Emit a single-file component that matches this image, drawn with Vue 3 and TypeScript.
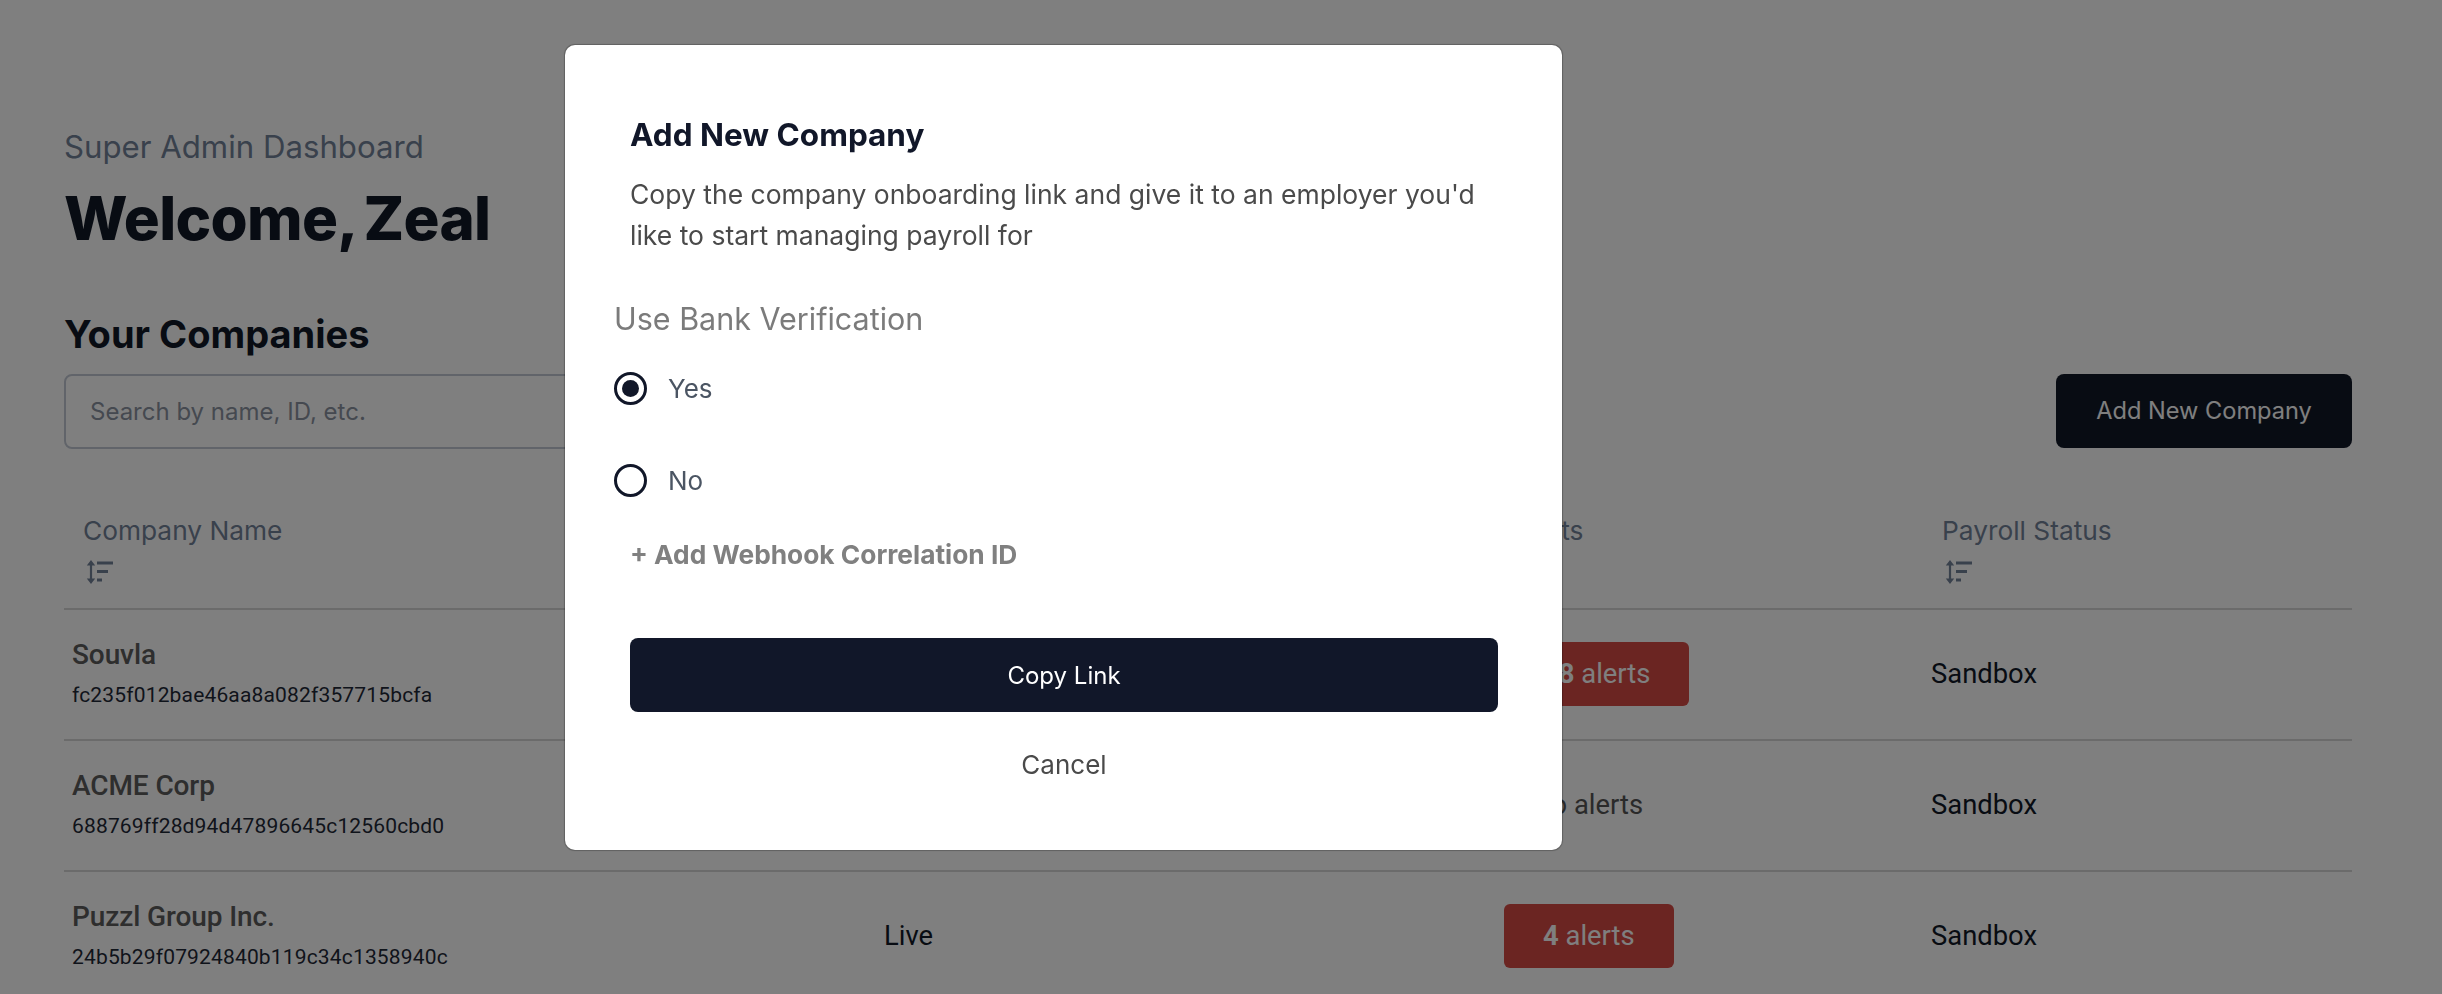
<script setup lang="ts">
interface Company {
  name: string
  id: string
  status: string
  count: string
  label: string
  danger: boolean
  payroll: string
}

const headers: string[] = ['Company Name', 'Status', 'Alerts', 'Payroll Status']

const companies: Company[] = [
  { name: 'Souvla', id: 'fc235f012bae46aa8a082f357715bcfa', status: 'Live', count: '18', label: 'alerts', danger: true, payroll: 'Sandbox' },
  { name: 'ACME Corp', id: '688769ff28d94d47896645c12560cbd0', status: 'Live', count: 'No', label: 'alerts', danger: false, payroll: 'Sandbox' },
  { name: 'Puzzl Group Inc.', id: '24b5b29f07924840b119c34c1358940c', status: 'Live', count: '4', label: 'alerts', danger: true, payroll: 'Sandbox' },
]
</script>

<template>
  <div class="page">
    <p class="eyebrow">Super Admin Dashboard</p>
    <h1 class="welcome">Welcome, Zeal</h1>
    <h2 class="section">Your Companies</h2>
    <div class="toolbar">
      <input class="search" type="text" placeholder="Search by name, ID, etc." />
      <button class="add" type="button">Add New Company</button>
    </div>
    <div class="table">
      <div class="row head">
        <div v-for="h in headers" :key="h" class="hcell">
          <span>{{ h }}</span>
          <svg class="sort" viewBox="0 0 28 24" width="28" height="24" fill="none" aria-hidden="true">
            <path d="M5 3v18" stroke="#738299" stroke-width="2.2" />
            <path d="M5 0 9.2 5.5H0.8ZM5 24 0.8 18.5H9.2Z" fill="#738299" />
            <path d="M11 3h16M11 11.5h11M11 20h5" stroke="#738299" stroke-width="3" />
          </svg>
        </div>
      </div>
      <div v-for="c in companies" :key="c.id" class="row body">
        <div class="cell first">
          <div class="name">{{ c.name }}</div>
          <div class="cid">{{ c.id }}</div>
        </div>
        <div class="cell">{{ c.status }}</div>
        <div class="cell">
          <span :class="c.danger ? 'badge' : 'plain'"><b v-if="c.danger">{{ c.count }}</b><template v-else>{{ c.count }}</template> {{ c.label }}</span>
        </div>
        <div class="cell">{{ c.payroll }}</div>
      </div>
    </div>
  </div>

  <div class="overlay">
    <div class="modal">
      <h3 class="m-title">Add New Company</h3>
      <p class="m-text">Copy the company onboarding link and give it to an employer you'd like to start managing payroll for</p>
      <div class="m-label">Use Bank Verification</div>
      <label class="radio yes">
        <span class="circle on"></span>
        <span>Yes</span>
      </label>
      <label class="radio no">
        <span class="circle"></span>
        <span>No</span>
      </label>
      <div class="webhook">+ Add Webhook Correlation ID</div>
      <button class="copy" type="button">Copy Link</button>
      <button class="cancel" type="button">Cancel</button>
    </div>
  </div>
</template>

<style>
html, body { margin: 0; height: 100%; overflow: hidden; background: #fff; }
</style>

<style scoped>
.page {
  box-sizing: border-box;
  height: 994px;
  overflow: hidden;
  padding: 127px 90px 0 64px;
  font-family: Inter, "Noto Sans", sans-serif;
  color: #111827;
  background: #fff;
}
.eyebrow { margin: 0; font-size: 31.2px; line-height: 40px; color: #738299; }
.welcome { margin: 16px 0 0; font-size: 60px; line-height: 70px; font-weight: 800; letter-spacing: -0.7px; word-spacing: -4px; color: #111827; }
.section { width: fit-content; margin: 59px 0 0; font-size: 38px; line-height: 44px; font-weight: 700; color: #111827; }
.toolbar { display: flex; justify-content: space-between; align-items: flex-start; margin-top: 18px; }
.search {
  box-sizing: border-box;
  width: 1200px;
  height: 75px;
  padding: 0 24px;
  border: 2px solid #c3c9d4;
  border-radius: 8px;
  font: 24px Inter, sans-serif;
  background: #fff;
}
.search::placeholder { color: #8b93a1; opacity: 1; }
.add {
  width: 296px;
  height: 74px;
  padding: 0 0 2px;
  border: 0;
  border-radius: 8px;
  background: #111827;
  color: #fff;
  font: 23.6px Inter, sans-serif;
}
.table { margin-top: 66px; }
.row { display: grid; grid-template-columns: 812px 620px 427px 429px; border-bottom: 2px solid #d7d7d7; }
.head { height: 95px; box-sizing: border-box; }
.hcell { display: flex; flex-direction: column; align-items: flex-start; padding: 0 0 0 19px; font-size: 26.3px; line-height: 32px; color: #738299; gap: 13px; }
.hcell:nth-child(3) { padding-left: 15px; }
.sort { margin-left: 3px; }
.body { height: 131px; box-sizing: border-box; align-items: center; font-size: 27.4px; color: #111827; padding-bottom: 2px; }
.cell { padding-left: 8px; font-family: Roboto, sans-serif; }
.first { align-self: start; padding-top: 27px; }
.name { font-size: 28px; line-height: 36px; font-weight: 500; letter-spacing: -0.1px; color: #5c5c5c; }
.cid { margin-top: 9px; font-size: 21px; line-height: 26px; letter-spacing: 0.16px; color: #1f2937; }
.badge { display: inline-block; padding: 0 39px; height: 64px; line-height: 64px; border-radius: 6px; background: #d64a44; color: #fff; }
.plain { display: inline-block; padding-left: 28px; color: #555; }

.overlay {
  position: fixed;
  inset: 0;
  background: rgba(0, 0, 0, 0.5);
  padding: 45px 0 0 565px;
  font-family: Inter, sans-serif;
}
.modal {
  box-sizing: border-box;
  width: 997px;
  height: 805px;
  padding: 67px 64px 0 65px;
  background: #fff;
  border-radius: 10px;
  box-shadow: 0 0 1px 1px rgba(0, 0, 0, 0.25);
  display: flex;
  flex-direction: column;
  align-items: flex-start;
}
.m-title { margin: 0; font-size: 31.5px; line-height: 46px; font-weight: 700; color: #111729; }
.m-text { margin: 16px 0 0; font-size: 26.5px; line-height: 40.5px; color: #4a4a4a; }
.m-label { margin: 42px 0 0 -16px; font-size: 30.5px; line-height: 44px; color: #7b7b7b; }
.radio { display: flex; align-items: center; gap: 21px; margin-left: -16px; font-size: 26px; line-height: 33px; color: #4b5563; }
.yes { margin-top: 31px; }
.no { margin-top: 59px; }
.circle { box-sizing: border-box; width: 33px; height: 33px; border: 3.5px solid #111729; border-radius: 50%; display: flex; align-items: center; justify-content: center; }
.circle.on::after { content: ""; width: 17px; height: 17px; border-radius: 50%; background: #111729; }
.webhook { margin-top: 42px; font-size: 26.3px; line-height: 32px; font-weight: 700; color: #808080; }
.copy { margin-top: 67px; width: 868px; height: 74px; border: 0; border-radius: 8px; background: #111729; color: #fff; font: 24px Inter, sans-serif; }
.cancel { margin-top: 25px; width: 868px; height: 54px; border: 0; background: transparent; color: #4a4a4a; font: 26px Inter, sans-serif; }
</style>
